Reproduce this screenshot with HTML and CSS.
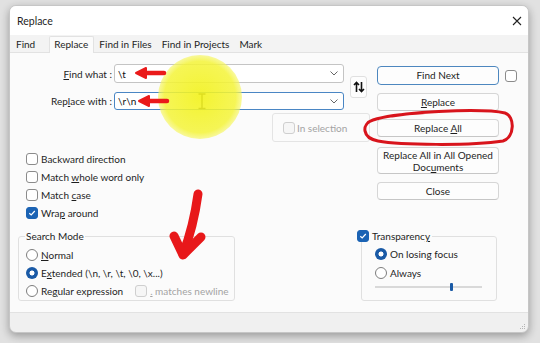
FILE: index.html
```html
<!DOCTYPE html>
<html>
<head>
<meta charset="utf-8">
<link rel="stylesheet" href="styles.css">
</head>
<body>
<div class="window">
  <div class="titlebar">
    <span class="title">Replace</span>
    <svg class="close" width="10" height="10" viewBox="0 0 10 10"><path d="M1 1L9 9M9 1L1 9" stroke="#222" stroke-width="1.1" fill="none"/></svg>
  </div>
  <div class="tabs">
    <span class="tab first">Find</span>
    <span class="tab active">Replace</span>
    <span class="tab">Find in Files</span>
    <span class="tab">Find in Projects</span>
    <span class="tab">Mark</span>
  </div>
  <div class="page">
    <div class="top">
      <div class="left">
        <div class="form">
          <span class="lbl"><u>F</u>ind what :</span>
          <div class="combo"><span class="val">\t</span><svg class="chev" width="8" height="5" viewBox="0 0 8 5"><path d="M0.5 0.5L4 4L7.5 0.5" stroke="#666" stroke-width="1" fill="none"/></svg></div>
          <div class="swap"><svg width="12" height="12" viewBox="0 0 12 12"><path d="M3.5 11V1.5M1 4L3.5 1.5L6 4M8.5 1V10.5M6 8L8.5 10.5L11 8" stroke="#111" stroke-width="1.6" fill="none"/></svg></div>
          <span class="lbl">Rep<u>l</u>ace with :</span>
          <div class="combo focus"><span class="val">\r\n</span><svg class="chev" width="8" height="5" viewBox="0 0 8 5"><path d="M0.5 0.5L4 4L7.5 0.5" stroke="#666" stroke-width="1" fill="none"/></svg></div>
        </div>
        <div class="selbox"><span class="cb dis"></span><span class="distext">In select<u>i</u>on</span></div>
        <div class="checks">
          <div class="row"><span class="cb"></span><span>Backward direction</span></div>
          <div class="row"><span class="cb"></span><span>Match <u>w</u>hole word only</span></div>
          <div class="row"><span class="cb"></span><span>Match <u>c</u>ase</span></div>
          <div class="row"><span class="cb on"><svg width="10" height="10" viewBox="0 0 10 10"><path d="M2.3 5.2L4.2 7L7.8 3" stroke="#fff" stroke-width="1.2" fill="none"/></svg></span><span>Wra<u>p</u> around</span></div>
        </div>
      </div>
      <div class="right">
        <div class="btnrow"><div class="btn default">Find Next</div><span class="cb side"></span></div>
        <div class="btn gap8"><u>R</u>eplace</div>
        <div class="btn gap8">Replace <u>A</u>ll</div>
        <div class="btn tall">Replace All in All Opened<br>Doc<u>u</u>ments</div>
        <div class="btn gap8">Close</div>
      </div>
    </div>
    <div class="bottom">
      <div class="group search">
        <div class="gtitle st">Search Mode</div>
        <div class="row"><span class="rb"></span><span><u>N</u>ormal</span></div>
        <div class="row"><span class="rb on"></span><span>E<u>x</u>tended (\n, \r, \t, \0, \x...)</span></div>
        <div class="row"><span class="rb"></span><span>Re<u>g</u>ular expression</span><span class="cb dis nl"></span><span class="distext"><u>.</u> matches newline</span></div>
      </div>
      <div class="group transp">
        <div class="gtitle tt"><span class="cb on"><svg width="10" height="10" viewBox="0 0 10 10"><path d="M2.3 5.2L4.2 7L7.8 3" stroke="#fff" stroke-width="1.2" fill="none"/></svg></span><span>Transparenc<u>y</u></span></div>
        <div class="trow"><span class="rb on"></span><span>On losing focus</span></div>
        <div class="trow"><span class="rb"></span><span>Always</span></div>
        <div class="slider"><span class="thumb"></span></div>
      </div>
    </div>
  </div>
  <div class="strip">
    <svg width="6" height="6" viewBox="0 0 6 6"><g fill="#b5b5b5"><rect x="4" y="0" width="1" height="1"/><rect x="2" y="2" width="1" height="1"/><rect x="4" y="2" width="1" height="1"/><rect x="0" y="4" width="1" height="1"/><rect x="2" y="4" width="1" height="1"/><rect x="4" y="4" width="1" height="1"/></g></svg>
  </div>
</div>
<svg class="annot" width="540" height="343" viewBox="0 0 540 343">
  <defs>
    <radialGradient id="yg" cx="0.5" cy="0.5" r="0.5">
      <stop offset="0" stop-color="#f2f21a" stop-opacity="0.9"/>
      <stop offset="0.85" stop-color="#f4f43a" stop-opacity="0.86"/>
      <stop offset="1" stop-color="#f6f660" stop-opacity="0.62"/>
    </radialGradient>
  </defs>
  <path d="M198.5 94H205.5M202 94V108.5M198.5 108.5H205.5" stroke="#2a2a2a" stroke-width="1.4" fill="none"/>
  <circle cx="200" cy="97" r="42" fill="url(#yg)"/>
  <g fill="#ea1a1a" stroke="#ea1a1a" stroke-linejoin="round" stroke-linecap="round">
    <path d="M144 73H164" stroke-width="4.5" fill="none"/>
    <path d="M136 73L146 68L146 78Z" stroke-width="2"/>
    <path d="M147 101H167" stroke-width="4.5" fill="none"/>
    <path d="M139 101L149 96L149 106Z" stroke-width="2"/>
  </g>
  <path d="M392 116C430 110 488 109 505 113C515 116 515 137 503 141C470 146 400 145 378 141C362 138 361 124 373 120C385 116 402 114 425 112.5" stroke="#d8141c" stroke-width="3" fill="none" stroke-linecap="round"/>
  <g stroke="#e8181a" stroke-width="9" fill="none" stroke-linecap="round" stroke-linejoin="round">
    <path d="M198 194C195 216 190 236 183 254"/>
    <path d="M174 236L183 255L201 237"/>
  </g>
</svg>
</body>
</html>
```
FILE: styles.css
```css
* { box-sizing: border-box; }
body {
  margin: 0;
  width: 540px;
  height: 343px;
  overflow: hidden;
  position: relative;
  background: #e1e1e1;
  font-family: Lato, "Noto Sans", sans-serif;
  font-size: 10px;
  color: #1e1e1e;
}
u { text-decoration-thickness: 1px; text-underline-offset: 1px; }
.window {
  margin: 5px 0 0 9px;
  width: 520px;
  height: 328px;
  border: 1px solid #c6c6c6;
  border-radius: 7px;
  background: #f0f0f0;
  box-shadow: 0 3px 9px rgba(0,0,0,.32);
  display: flex;
  flex-direction: column;
  overflow: hidden;
}
.titlebar {
  height: 29px;
  flex: none;
  background: #fff;
  display: flex;
  align-items: center;
  justify-content: space-between;
  padding: 0 6px 0 7px;
  font-size: 10.5px;
}
.close { margin-top: 1px; }
.tabs {
  height: 17px;
  flex: none;
  background: #f3f3f3;
  display: flex;
  align-items: flex-end;
  z-index: 1;
}
.tab {
  height: 16px;
  line-height: 16px;
  padding: 0 5px;
}
.tab.first { padding: 0 14px 0 6px; }
.tab.active {
  height: 17px;
  margin-bottom: -1px;
  padding: 0 5px 0 4px;
  background: #fbfbfb;
  border: 1px solid #e2e2e2;
  border-bottom: none;
  border-radius: 2px 2px 0 0;
  line-height: 14px;
}
.page {
  height: 261px;
  flex: none;
  background: #fbfbfb;
  border-top: 1px solid #e2e2e2;
  border-bottom: 1px solid #e2e2e2;
  display: flex;
  flex-direction: column;
}
.top { display: flex; height: 169px; }
.left { width: 360px; display: flex; flex-direction: column; }
.form {
  display: grid;
  grid-template-columns: 104px 236px 17px;
  grid-template-rows: 19px 18px;
  row-gap: 9px;
  margin-top: 11px;
}
.lbl { grid-column: 1; text-align: right; padding-right: 2px; align-self: center; white-space: nowrap; }
.combo {
  grid-column: 2;
  width: 230px;
  background: #fff;
  border: 1px solid #c4c4c4;
  border-radius: 3px;
  display: flex;
  align-items: center;
  justify-content: space-between;
  padding: 0 5px 0 3px;
}
.combo.focus { border-color: #4a86c4; }
.val { color: #111; }
.swap {
  grid-column: 3;
  grid-row: 1 / span 2;
  align-self: center;
  height: 22px;
  background: #fdfdfd;
  border: 1px solid #e0e0e0;
  border-radius: 3px;
  display: flex;
  align-items: center;
  justify-content: center;
}
.selbox {
  margin: 3px 0 0 262px;
  width: 98px;
  height: 29px;
  border: 1px solid #e4e4e4;
  border-radius: 3px;
  display: flex;
  align-items: center;
  padding-left: 10px;
  gap: 2px;
}
.distext { color: #a3a3a3; white-space: nowrap; }
.checks { margin: 8px 0 0 16px; }
.row { height: 18px; display: flex; align-items: center; gap: 3px; white-space: nowrap; }
.cb {
  flex: none;
  width: 12px;
  height: 12px;
  border: 1px solid #8b8b8b;
  border-radius: 3px;
  background: #fff;
  display: flex;
  align-items: center;
  justify-content: center;
}
.cb.on { background: #1b63b4; border-color: #1b63b4; }
.cb.dis { border-color: #cfcfcf; background: #f6f6f6; }
.cb.nl { margin-left: 9px; }
.rb {
  flex: none;
  width: 12px;
  height: 12px;
  border: 1px solid #7d7d7d;
  border-radius: 50%;
  background: #fff;
}
.rb.on {
  border: none;
  background: radial-gradient(circle, #fff 0 2.2px, #1a5aa6 2.8px);
}
.right { display: flex; flex-direction: column; margin-left: 7px; padding-top: 13px; }
.btnrow { display: flex; align-items: center; gap: 6px; }
.btn {
  display: block;
  width: 122px;
  height: 18px;
  background: #fdfdfd;
  border: 1px solid #d6d6d6;
  border-bottom-color: #c6c6c6;
  border-radius: 4px;
  text-align: center;
  line-height: 16px;
  white-space: nowrap;
}
.btn.default { height: 19px; line-height: 17px; border: 1px solid #4d87bf; }
.btn.gap8 { margin-top: 8px; }
.btn.tall { margin-top: 10px; height: 27px; line-height: 12px; padding-top: 1px; }
.bottom { display: flex; margin-top: 14px; }
.group {
  border: 1px solid #e0e0e0;
  border-radius: 3px;
  display: flex;
  flex-direction: column;
}
.gtitle {
  margin-top: -7px;
  line-height: 12px;
  height: 12px;
  width: max-content;
  padding: 0 1px;
  background: #fbfbfb;
  white-space: nowrap;
}
.search { margin-left: 8px; width: 217px; padding: 0 6px 0 7px; }
.st { margin-left: -1px; margin-bottom: 4px; }
.transp { margin-left: 126px; width: 136px; padding: 0 6px 7px 13px; }
.tt { display: flex; align-items: center; gap: 3px; margin-left: -18px; padding: 0 2px 0 0; margin-bottom: 2px; }
.trow { height: 19px; display: flex; align-items: center; gap: 3px; }
.slider {
  height: 10px;
  width: 107px;
  display: flex;
  align-items: center;
  background: linear-gradient(#d9d9d9, #d9d9d9) 0 4px / 100% 2px no-repeat;
}
.thumb { width: 3px; height: 8px; margin-left: 75px; background: #1a5aa6; border-radius: 1px; }
.strip { flex: 1; display: flex; justify-content: flex-end; align-items: flex-end; padding: 0 2px 2px 0; }
.annot { position: absolute; left: 0; top: 0; pointer-events: none; }
```
